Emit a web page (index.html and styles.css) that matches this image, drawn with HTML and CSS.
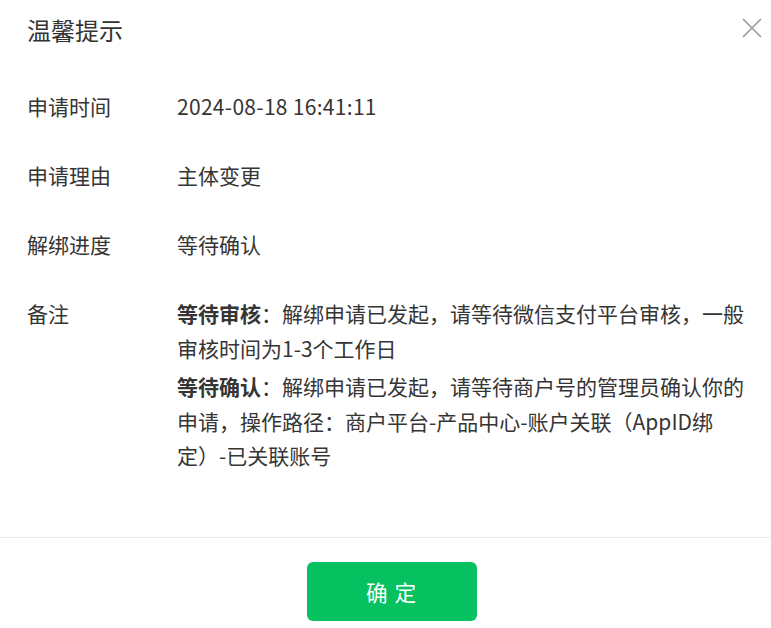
FILE: index.html
```html
<!DOCTYPE html>
<html lang="zh-CN">
<head>
  <meta charset="UTF-8">
  <meta name="viewport" content="width=device-width, initial-scale=1.0">
  <title>温馨提示</title>
  <link rel="stylesheet" href="styles.css">
</head>
<body>

<div class="dialog">
  <div class="dialog-hd">
    <h3 class="dialog-title">温馨提示</h3>
    <button class="dialog-close" type="button" aria-label="关闭">
      <svg width="22" height="22" viewBox="0 0 22 22">
        <path d="M2 2 L20 20 M20 2 L2 20" stroke="#9a9a9a" stroke-width="1.6" fill="none"/>
      </svg>
    </button>
  </div>

  <div class="dialog-bd">
    <div class="info-row">
      <div class="info-label">申请时间</div>
      <div class="info-value info-date">2024-08-18 16:41:11</div>
    </div>
    <div class="info-row">
      <div class="info-label">申请理由</div>
      <div class="info-value">主体变更</div>
    </div>
    <div class="info-row">
      <div class="info-label">解绑进度</div>
      <div class="info-value">等待确认</div>
    </div>
    <div class="info-row">
      <div class="info-label">备注</div>
      <div class="info-value">
        <p class="note"><strong>等待审核</strong>：解绑申请已发起，请等待微信支付平台审核，一般审核时间为1-3个工作日</p>
        <p class="note"><strong>等待确认</strong>：解绑申请已发起，请等待商户号的管理员确认你的申请，操作路径：商户平台-产品中心-账户关联（AppID绑定）-已关联账号</p>
      </div>
    </div>
  </div>

  <div class="dialog-ft">
    <button class="btn-primary" type="button">确 定</button>
  </div>
</div>

</body>
</html>
```

FILE: styles.css
```css
/* Grundlayout */
body {
  margin: 0;
  background: #fff;
  color: #353535;
  font-family: "Noto Sans CJK SC", "Noto Sans", sans-serif;
}

.dialog {
  width: 771px;
  height: 628px;
  overflow: hidden;
}

/* Kopfbereich */
.dialog-hd {
  display: flex;
  justify-content: space-between;
  align-items: flex-start;
  padding: 13px 8px 0 27px;
}

.dialog-title {
  margin: 0;
  font-size: 24px;
  line-height: 34px;
  font-weight: normal;
  color: #333;
}

.dialog-close {
  margin-top: 4px;
  padding: 0;
  border: 0;
  background: none;
  width: 22px;
  height: 22px;
  cursor: pointer;
}

.dialog-close svg {
  display: block;
}

/* Inhalt */
.dialog-bd {
  padding: 42px 12px 64px 27px;
}

.info-row {
  display: flex;
  font-size: 21px;
  line-height: 34.5px;
  margin-bottom: 34.5px;
}

.info-row:last-child {
  margin-bottom: 0;
}

.info-label {
  width: 150px;
  flex-shrink: 0;
}

.info-value {
  flex: 1;
  min-width: 0;
}

.info-date {
  letter-spacing: 0.3px;
}

.note {
  margin: 0 0 4px;
}

.note:last-child {
  margin-bottom: 0;
}

.note strong {
  font-weight: bold;
}

/* Fussbereich */
.dialog-ft {
  border-top: 1px solid #ececec;
  padding: 24px 0 0 12px;
  display: flex;
  justify-content: center;
}

.btn-primary {
  width: 170px;
  height: 59px;
  border: 0;
  border-radius: 6px;
  background: #07c160;
  color: #fff;
  font-family: inherit;
  font-size: 21.6px;
  letter-spacing: 1px;
  cursor: pointer;
}
```
